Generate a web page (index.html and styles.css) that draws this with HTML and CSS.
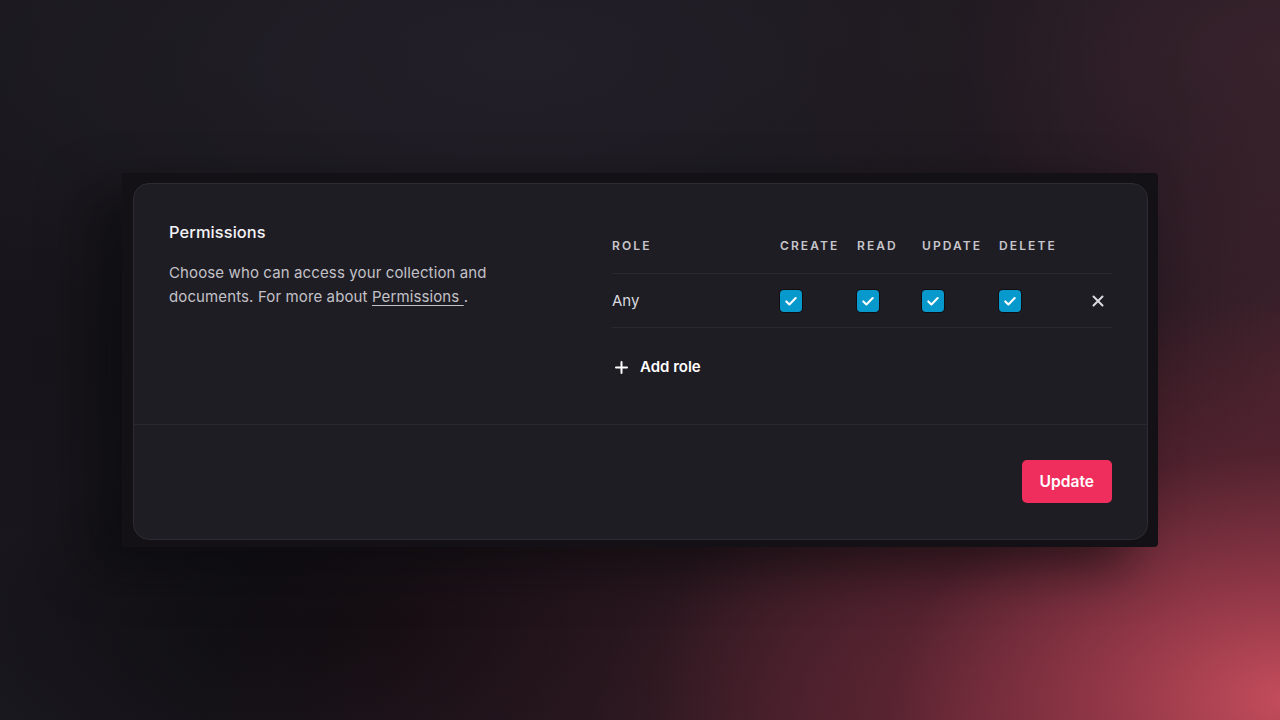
FILE: index.html
```html
<!DOCTYPE html>
<html lang="en">
<head>
<meta charset="utf-8">
<title>Permissions</title>
<link rel="stylesheet" href="styles.css">
</head>
<body>
<div class="stage">
  <div class="backdrop">
    <section class="card">
      <div class="card-body">
        <div class="intro">
          <h2 class="title">Permissions</h2>
          <p class="desc">Choose who can access your collection and documents. For more about <a class="link" href="#">Permissions </a>.</p>
        </div>
        <div class="perms">
          <div class="grid head">
            <div class="th">Role</div>
            <div class="th">Create</div>
            <div class="th">Read</div>
            <div class="th">Update</div>
            <div class="th">Delete</div>
            <div class="th"></div>
          </div>
          <div class="grid row">
            <div class="td role">Any</div>
            <div class="td"><span class="cb"><svg viewBox="0 0 22 22" width="22" height="22"><path d="M6.3 11.4l3.1 3 6.3-6.3" fill="none" stroke="#fff" stroke-width="2.1" stroke-linecap="round" stroke-linejoin="round"/></svg></span></div>
            <div class="td"><span class="cb"><svg viewBox="0 0 22 22" width="22" height="22"><path d="M6.3 11.4l3.1 3 6.3-6.3" fill="none" stroke="#fff" stroke-width="2.1" stroke-linecap="round" stroke-linejoin="round"/></svg></span></div>
            <div class="td"><span class="cb"><svg viewBox="0 0 22 22" width="22" height="22"><path d="M6.3 11.4l3.1 3 6.3-6.3" fill="none" stroke="#fff" stroke-width="2.1" stroke-linecap="round" stroke-linejoin="round"/></svg></span></div>
            <div class="td"><span class="cb"><svg viewBox="0 0 22 22" width="22" height="22"><path d="M6.3 11.4l3.1 3 6.3-6.3" fill="none" stroke="#fff" stroke-width="2.1" stroke-linecap="round" stroke-linejoin="round"/></svg></span></div>
            <div class="td"><svg class="x" viewBox="0 0 12 12" width="12" height="12"><path d="M1.5 1.5l9 9M10.5 1.5l-9 9" stroke="#dcdbe0" stroke-width="2" stroke-linecap="round"/></svg></div>
          </div>
          <button class="add" type="button"><svg viewBox="0 0 13 13" width="13" height="13"><path d="M6.5 1v11M1 6.5h11" stroke="#fff" stroke-width="2" stroke-linecap="round"/></svg><span>Add role</span></button>
        </div>
      </div>
      <div class="card-foot">
        <button class="update" type="button">Update</button>
      </div>
    </section>
  </div>
</div>
</body>
</html>
```

FILE: styles.css
```css
* { box-sizing: border-box; }
html, body { margin: 0; height: 100%; }
body {
  font-family: Inter, "Noto Sans", "Liberation Sans", sans-serif;
  color: #e8e7ec;
  background-color: #17151b;
  background-image:
    radial-gradient(ellipse 640px 400px at 1290px 700px, rgba(205,80,95,0.95) 0%, rgba(170,62,80,0.75) 30%, rgba(110,40,55,0.45) 62%, rgba(60,25,35,0) 100%),
    radial-gradient(ellipse 760px 460px at 960px 720px, rgba(92,36,50,0.8) 0%, rgba(62,26,36,0.45) 50%, rgba(30,18,24,0) 100%),
    radial-gradient(ellipse 360px 520px at 1290px 380px, rgba(78,38,50,0.7) 0%, rgba(50,28,38,0.3) 60%, rgba(30,20,26,0) 100%),
    radial-gradient(ellipse 540px 380px at 1280px 60px, rgba(62,38,48,0.9) 0%, rgba(40,26,34,0.4) 60%, rgba(25,20,26,0) 100%),
    radial-gradient(ellipse 700px 300px at 520px 60px, rgba(34,31,40,1) 0%, rgba(28,26,33,0) 100%),
    radial-gradient(ellipse 420px 200px at 380px 630px, rgba(10,9,12,0.9) 0%, rgba(10,9,12,0) 100%),
    linear-gradient(180deg, #1a181e 0%, #17151b 50%, #1a181f 100%);
  overflow: hidden;
}
.stage {
  height: 720px;
  display: flex;
  align-items: flex-start;
  justify-content: flex-start;
  padding: 173px 0 0 122px;
}
.backdrop {
  width: 1036px;
  padding: 10px 10px 7px 11px;
  background: #131116;
  border-radius: 2px 4px 4px 2px;
  box-shadow: -30px 20px 50px rgba(8,7,10,0.55);
}
.card {
  background: #1f1d24;
  border: 1px solid #2d2b33;
  border-radius: 16px;
}
.card-body {
  display: grid;
  grid-template-columns: 408px 500px;
  column-gap: 35px;
  padding: 37px 35px 46px 35px;
  border-bottom: 1px solid #2b2930;
}
.title {
  margin: 0;
  font-size: 16.4px;
  line-height: 22px;
  font-weight: 500;
  letter-spacing: 0.1px;
  color: #f3f3f6;
}
.desc {
  margin: 18px 0 0;
  font-size: 15px;
  line-height: 24px;
  letter-spacing: 0.12px;
  color: #c3c2c8;
  width: 340px;
}
.link {
  color: #c3c2c8;
  text-decoration: underline;
  text-underline-offset: 3px;
  text-decoration-thickness: 1px;
}
.perms { padding-top: 17px; }
.grid {
  display: grid;
  grid-template-columns: 168px 77px 65px 77px 93px 20px;
  align-items: center;
}
.head {
  padding-bottom: 19px;
  border-bottom: 1px solid #2b2930;
}
.th {
  font-size: 12px;
  line-height: 16px;
  font-weight: 600;
  letter-spacing: 2.1px;
  text-transform: uppercase;
  color: #c7c6cc;
}
.row {
  height: 54px;
  border-bottom: 1px solid #2b2930;
}
.td { display: flex; align-items: center; }
.role {
  font-size: 15px;
  color: #d9d8dd;
}
.cb {
  display: inline-flex;
  width: 22px;
  height: 22px;
  border-radius: 4px;
  background: #0899cc;
  box-shadow: 0 0 0 1px #120d10;
}
.x { display: block; }
.add {
  margin-top: 29px;
  display: inline-flex;
  align-items: center;
  gap: 12px;
  padding: 0 0 0 3px;
  background: none;
  border: 0;
  font-family: inherit;
  font-size: 15px;
  line-height: 20px;
  font-weight: 600;
  color: #ffffff;
  cursor: pointer;
}
.add svg { display: block; }
.card-foot {
  display: flex;
  justify-content: flex-end;
  padding: 35px 35px 36px;
}
.update {
  height: 43px;
  padding: 0 18px;
  border: 0;
  border-radius: 5px;
  background: #f02e5e;
  color: #ffffff;
  font-family: inherit;
  font-size: 15.6px;
  font-weight: 600;
  cursor: pointer;
}
```
